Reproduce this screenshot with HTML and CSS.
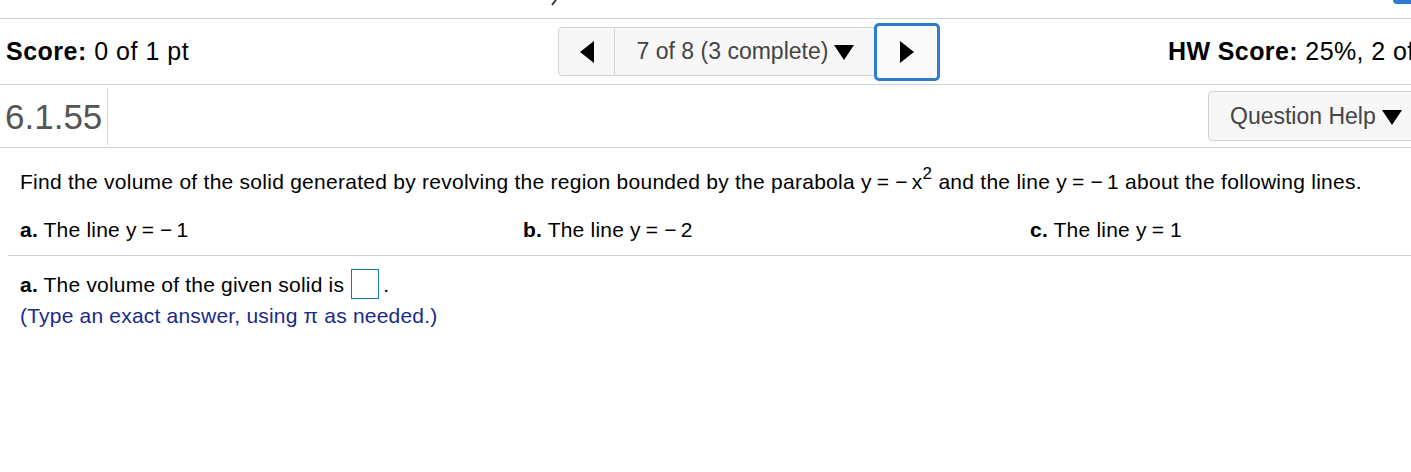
FILE: index.html
```html
<!DOCTYPE html>
<html>
<head>
<meta charset="utf-8">
<link rel="stylesheet" href="styles.css">
</head>
<body>
<div class="page">
  <div class="topbar">
    <svg class="topmark" width="6" height="6" viewBox="0 0 6 6"><line x1="1" y1="5" x2="5" y2="0" stroke="#333" stroke-width="2"/></svg>
    <span class="topbtn"></span>
  </div>
  <div class="scorerow">
    <div class="score"><b>Score:</b> 0 of 1 pt</div>
    <div class="nav">
      <button class="navbtn prev"><svg width="16" height="22" viewBox="0 0 16 22"><polygon points="15,0 15,22 1,11" fill="#000"/></svg></button>
      <button class="navbtn mid">7 of 8 (3 complete) <svg class="caret" width="20" height="15" viewBox="0 0 20 15"><polygon points="0,0 20,0 10,15" fill="#000"/></svg></button>
      <button class="navbtn next"><svg width="16" height="22" viewBox="0 0 16 22"><polygon points="1,0 1,22 15,11" fill="#000"/></svg></button>
    </div>
    <div class="hw"><b>HW Score:</b> 25%, 2 of 8 points</div>
  </div>
  <div class="qrow">
    <div class="qnum">6.1.55</div>
    <div class="qspacer"></div>
    <button class="helpbtn">Question Help <svg class="caret" width="20" height="15" viewBox="0 0 20 15"><polygon points="0,0 20,0 10,15" fill="#000"/></svg></button>
  </div>
  <div class="content">
    <p class="prompt">Find the volume of the solid generated by revolving the region bounded by the parabola y<span class="eq">=</span><span class="minus">−</span>x<sup>2</sup> and the line y<span class="eq">=</span><span class="minus">−</span>1 about the following lines.</p>
    <div class="parts">
      <div class="part"><b>a.</b> The line y<span class="eq">=</span><span class="minus">−</span>1</div>
      <div class="part"><b>b.</b> The line y<span class="eq">=</span><span class="minus">−</span>2</div>
      <div class="part"><b>c.</b> The line y<span class="eq">=</span>1</div>
    </div>
  </div>
  <div class="answer">
    <div class="ansline"><b>a.</b> The volume of the given solid is<span class="inbox"></span>.</div>
    <div class="hint">(Type an exact answer, using π as needed.)</div>
  </div>
</div>
</body>
</html>
```
FILE: styles.css
```css
html, body {
  margin: 0;
  padding: 0;
  background: #fff;
}
.page {
  font-family: "Liberation Sans", Arial, sans-serif;
  color: #000;
  width: 1411px;
  overflow: hidden;
}
.topbar {
  height: 18px;
  border-bottom: 1px solid #cfd3da;
  display: flex;
  justify-content: space-between;
  align-items: flex-start;
  overflow: hidden;
}
.topmark {
  margin-left: 551px;
}
.topbtn {
  width: 18px;
  height: 4px;
  background: #2f7bd0;
  border-bottom-left-radius: 4px;
}
.scorerow {
  height: 65px;
  display: flex;
  align-items: center;
  border-bottom: 1px solid #cfd3da;
  white-space: nowrap;
  overflow: hidden;
}
.score {
  flex: none;
  font-size: 25px;
  letter-spacing: 0.5px;
  width: 552px;
  padding-left: 6px;
}
.nav {
  flex: none;
  display: flex;
  align-items: center;
}
.navbtn {
  font-family: "Liberation Sans", Arial, sans-serif;
  background: #f7f7f7;
  border: 1px solid #d3d3d3;
  height: 49px;
  margin: 0;
  padding: 0;
  display: flex;
  align-items: center;
  justify-content: center;
}
.prev {
  width: 57px;
  border-radius: 4px 0 0 4px;
}
.mid {
  width: 259px;
  border-left: none;
  border-right: none;
  font-size: 23px;
  color: #444;
  gap: 6px;
  padding-left: 2px;
}
.next {
  width: 66px;
  height: 58px;
  border: 3px solid #2f7bd0;
  border-radius: 5px;
  background: #fafafa;
}
.caret {
  margin-top: 2px;
}
.hw {
  flex: none;
  font-size: 25px;
  letter-spacing: 0.4px;
  margin-left: 228px;
}
.qrow {
  height: 62px;
  display: flex;
  align-items: center;
  border-bottom: 1px solid #cfd3da;
  overflow: hidden;
  white-space: nowrap;
}
.qnum {
  flex: none;
  font-size: 35px;
  color: #555;
  padding-left: 5px;
  width: 108px;
  height: 57px;
  line-height: 57px;
  border-right: 1px solid #cfd3da;
  box-sizing: border-box;
}
.qspacer {
  flex: 1;
}
.helpbtn {
  font-family: "Liberation Sans", Arial, sans-serif;
  flex: none;
  width: 215px;
  margin-right: -12px;
  height: 50px;
  background: #f7f7f7;
  border: 1px solid #d3d3d3;
  border-radius: 4px;
  font-size: 23px;
  color: #444;
  display: flex;
  align-items: center;
  gap: 6px;
  padding: 0 0 0 21px;
}
.content {
  margin-left: 8px;
  padding-left: 12px;
  border-bottom: 1px solid #d0d0d8;
}
.prompt {
  margin: 0;
  padding-top: 22px;
  font-size: 21px;
  letter-spacing: 0.26px;
  line-height: 24px;
}
.prompt sup {
  font-size: 17px;
  line-height: 0;
  vertical-align: 10px;
}
.eq {
  margin: 0 6px 0 5px;
}
.minus {
  margin-right: 4px;
}
.parts {
  display: grid;
  grid-template-columns: 503px 507px 1fr;
  padding-top: 24px;
  padding-bottom: 13px;
  font-size: 21px;
  letter-spacing: 0.2px;
  line-height: 24px;
}
.answer {
  padding-left: 20px;
  padding-top: 12px;
  font-size: 21px;
  letter-spacing: 0.2px;
}
.ansline {
  line-height: 33px;
}
.inbox {
  display: inline-block;
  vertical-align: middle;
  width: 26px;
  height: 28px;
  border: 1px solid #1f7a9a;
  margin: -4px 4px 0 7px;
}
.hint {
  color: #1a2a8a;
  line-height: 30px;
}
```
